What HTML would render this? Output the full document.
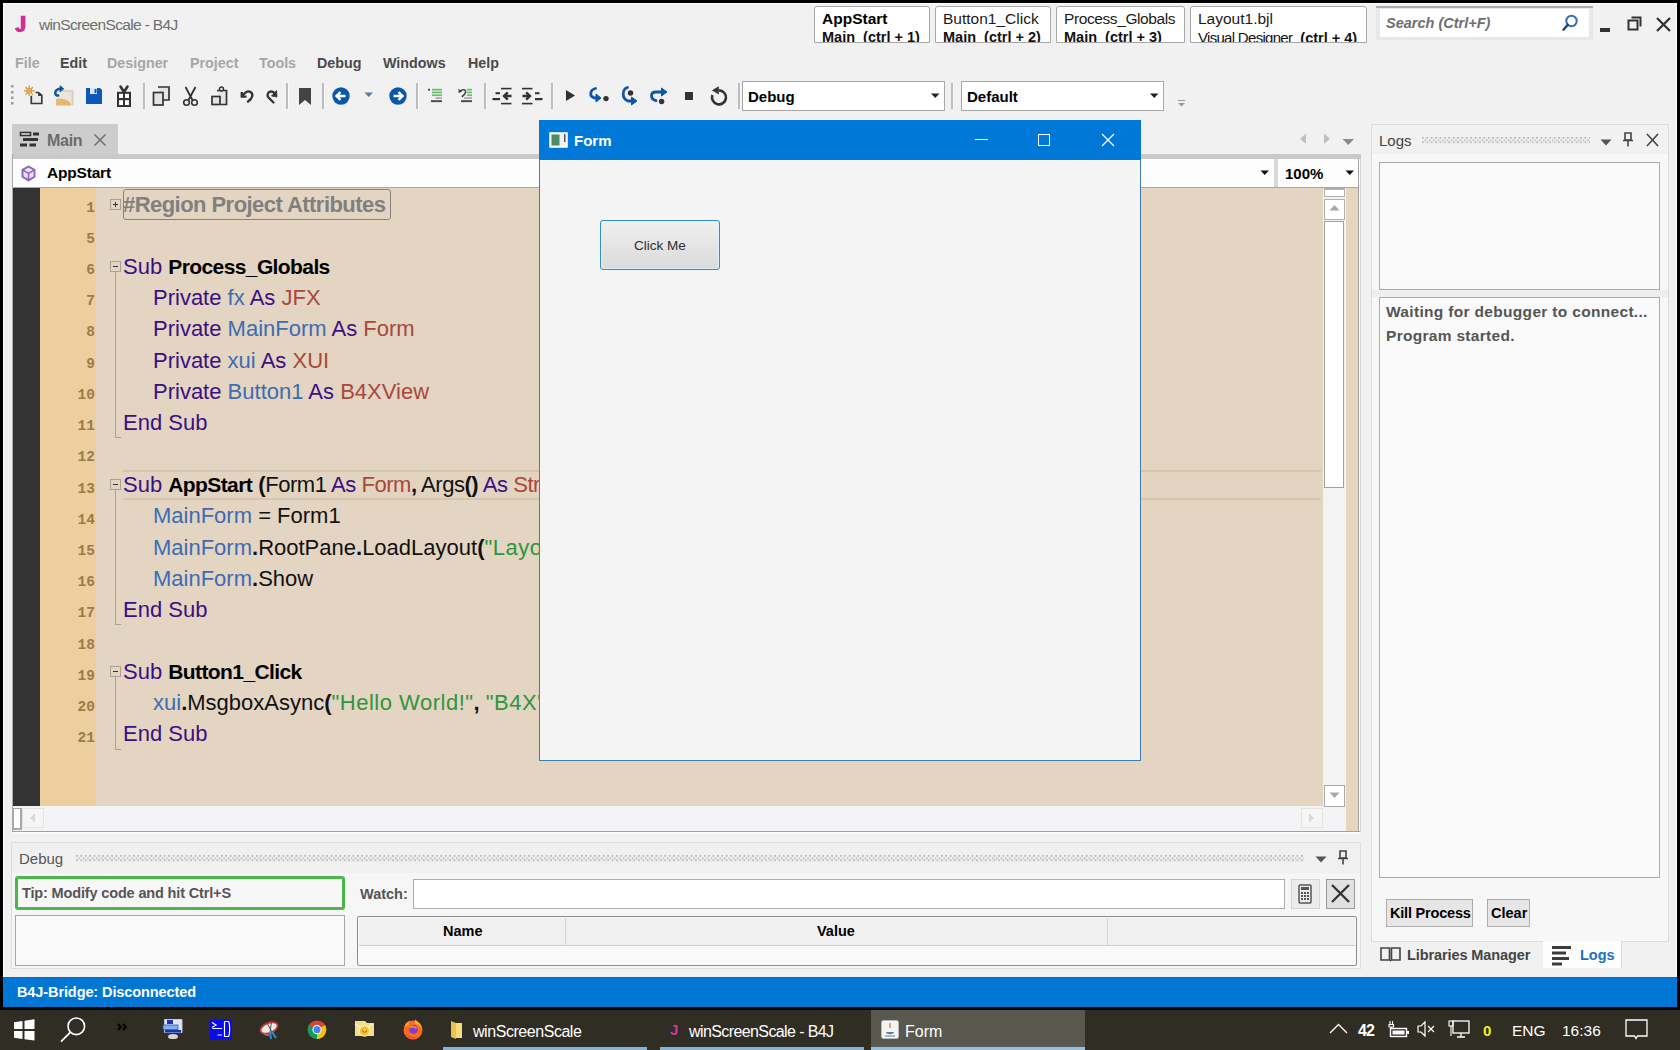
<!DOCTYPE html>
<html><head><meta charset="utf-8">
<style>
*{box-sizing:border-box}
html,body{margin:0;padding:0}
body{width:1680px;height:1050px;background:#000;position:relative;overflow:hidden;font-family:"Liberation Sans",sans-serif;}
.a{position:absolute}
.t{position:absolute;white-space:nowrap;line-height:1}
svg{position:absolute;overflow:visible}
.mn{font-weight:bold;font-size:14.3px;top:56px;color:#a6a6a6}
.md{color:#4a4a4a}
.sep{position:absolute;top:83px;width:3px;height:26px;background:#bdbdbd;border-right:1px solid #fafafa}
.code{position:absolute;left:0;top:0;font-size:22px;line-height:1;white-space:nowrap;color:#111}
.kw{color:#3b0f82}.vr{color:#3d6cb3}.ty{color:#a8483e}.st{color:#2f9640;letter-spacing:0.5px}.bd{font-weight:bold;color:#000;font-size:21px;letter-spacing:-0.6px}
.ln{position:absolute;font-family:"Liberation Mono",monospace;font-size:14.5px;font-weight:bold;color:#9a7c46;text-align:right;width:40px;left:55px;line-height:1}
.fold{position:absolute;left:110px;width:11px;height:11px;border:1px solid #a9a196;background:#e3d5c2}
.fold:before{content:"";position:absolute;left:2px;top:4px;width:5px;height:1px;background:#333}
.fold.p:after{content:"";position:absolute;left:4px;top:2px;width:1px;height:5px;background:#333}
.vl{position:absolute;left:115px;width:1px;background:#a9a196}
.tab{position:absolute;top:6px;height:37px;background:#fff;border:1px solid #a8a8a8;border-radius:3px 3px 0 0;overflow:hidden}
.tab .l1{position:absolute;left:7px;top:4px;font-size:15.5px;color:#1a1a1a;white-space:nowrap;line-height:1}
.tab .l2{position:absolute;left:7px;top:23px;font-size:14.5px;color:#111;font-weight:bold;white-space:nowrap;line-height:1}
</style></head><body>
<!-- main window -->
<div class="a" style="left:3px;top:3px;width:1674px;height:1004px;background:#f1f1f1;border:1px solid #fff;border-bottom:0"></div>

<!-- title -->
<svg style="left:0;top:0" width="30" height="36"><path d="M20.8 15.8H25.4V26C25.4 30.3 23 32.2 20 32.2C17.4 32.2 15.5 30.6 14.9 28.2L18.6 27C19 28.3 19.5 28.9 20.2 28.9C20.9 28.9 20.8 28 20.8 26.6Z" fill="#cd2f92"/></svg>
<div class="t" style="left:39px;top:17px;font-size:15.5px;color:#6e6e6e;letter-spacing:-0.65px">winScreenScale - B4J</div>

<!-- title tabs -->
<div class="tab" style="left:814px;width:116px"><div class="l1" style="font-weight:bold;color:#000;font-size:15.5px">AppStart</div><div class="l2">Main&nbsp; (ctrl + 1)</div></div>
<div class="tab" style="left:935px;width:116px"><div class="l1">Button1_Click</div><div class="l2">Main&nbsp; (ctrl + 2)</div></div>
<div class="tab" style="left:1056px;width:129px"><div class="l1" style="letter-spacing:-0.4px">Process_Globals</div><div class="l2">Main&nbsp; (ctrl + 3)</div></div>
<div class="tab" style="left:1190px;width:177px"><div class="l1">Layout1.bjl</div><div class="l2"><span style="font-weight:normal;font-size:15px;letter-spacing:-0.7px">Visual Designer</span>&nbsp; (ctrl + 4)</div></div>

<!-- search -->
<div class="a" style="left:1376px;top:6px;width:217px;height:34px;background:#e6e8ec;border-top:2px solid #a9abb0"></div>
<div class="a" style="left:1380px;top:9px;width:209px;height:28px;background:#fff"></div>
<div class="t" style="left:1386px;top:16px;font-size:14.5px;font-style:italic;font-weight:bold;color:#6e6e6e">Search (Ctrl+F)</div>
<svg style="left:1560px;top:13px" width="20" height="20"><circle cx="11.5" cy="8" r="5.2" fill="none" stroke="#3569c4" stroke-width="2"/><line x1="7.8" y1="11.8" x2="3.5" y2="16.8" stroke="#1f3d80" stroke-width="2.4" stroke-linecap="round"/></svg>
<!-- window controls -->
<div class="a" style="left:1600px;top:28px;width:10px;height:4px;background:#333"></div>
<svg style="left:1626px;top:15px" width="18" height="18"><rect x="2.5" y="5.5" width="9" height="9" fill="none" stroke="#333" stroke-width="2"/><path d="M5.5 2.5H14.5V11.5" fill="none" stroke="#333" stroke-width="2"/></svg>
<svg style="left:1655px;top:16px" width="17" height="17"><path d="M2 2L15 15M15 2L2 15" stroke="#333" stroke-width="2.3"/></svg>

<!-- menu -->
<div class="t mn" style="left:15px">File</div>
<div class="t mn md" style="left:60px">Edit</div>
<div class="t mn" style="left:107px">Designer</div>
<div class="t mn" style="left:190px">Project</div>
<div class="t mn" style="left:259px">Tools</div>
<div class="t mn md" style="left:317px">Debug</div>
<div class="t mn md" style="left:383px">Windows</div>
<div class="t mn md" style="left:468px">Help</div>
<!-- toolbar -->
<svg style="left:11px;top:85px" width="4" height="22"><rect x="0" y="0" width="2.5" height="2.5" fill="#9a9a9a"/><rect x="0" y="6" width="2.5" height="2.5" fill="#9a9a9a"/><rect x="0" y="11.5" width="2.5" height="2.5" fill="#9a9a9a"/><rect x="0" y="17" width="2.5" height="2.5" fill="#9a9a9a"/></svg>
<!-- new -->
<svg style="left:20px;top:82px" width="26" height="26">
<path d="M11.3 13.8V21.5H21.8V13.5L18.5 10.5H15.5" fill="#ececec" stroke="#3a3a3a" stroke-width="1.7"/><path d="M18.5 10.5V13.5H21.8Z" fill="#3a3a3a" stroke="#3a3a3a" stroke-width="1"/>
<g stroke="#d0963a" stroke-width="1.2" stroke-linecap="round"><line x1="9.2" y1="4" x2="9.2" y2="13.8"/><line x1="4.3" y1="8.9" x2="14.1" y2="8.9"/><line x1="5.8" y1="5.5" x2="12.6" y2="12.3"/><line x1="12.6" y1="5.5" x2="5.8" y2="12.3"/></g><circle cx="9.2" cy="8.9" r="2.3" fill="#f0b450" stroke="#d08a2a" stroke-width="0.8"/>
</svg>
<!-- open -->
<svg style="left:50px;top:82px" width="28" height="26">
<path d="M6 7.5H22.5V23.5H6Z" fill="#ebe6dc"/><path d="M9 9H22.5V23.5" fill="none" stroke="#d8ccb2" stroke-width="1.6"/>
<path d="M6 17.5C9 16 15 16 20 20.5L21.5 23.5H6Z" fill="#e3b872"/>
<path d="M10.5 6.8C7 6.8 5 9 5.3 11.3C5.5 12.8 6.6 13.6 8.2 13.6" fill="none" stroke="#0c57a8" stroke-width="2.5" stroke-linecap="round"/><path d="M10 3.8L13.8 6.8L10 9.8Z" fill="#0c57a8" stroke="#0c57a8" stroke-width="0.8" stroke-linejoin="round"/>
</svg>
<!-- save -->
<svg style="left:85px;top:87px" width="18" height="18"><path d="M1 1H15L17 3V17H1Z" fill="#0b58b8"/><rect x="5" y="1" width="7" height="6" fill="#dde6f4"/><rect x="9.5" y="2" width="2" height="4" fill="#0b58b8"/></svg>
<!-- gift -->
<svg style="left:110px;top:82px" width="30" height="26"><path d="M14 10L10.5 4.5M14 10L17.5 4.5" stroke="#333" stroke-width="2.6" stroke-linecap="round"/><rect x="8" y="10.8" width="12" height="13.2" fill="#fff" stroke="#333" stroke-width="2"/><rect x="13" y="10" width="2" height="14" fill="#333"/><rect x="7.5" y="16" width="13" height="2.2" fill="#333"/></svg>
<div class="sep" style="left:143px"></div>
<!-- copy -->
<svg style="left:152px;top:86px" width="20" height="20"><path d="M6 1H17V14H11" fill="#e4e4e4" stroke="#333" stroke-width="1.7"/><rect x="1.5" y="6.5" width="9.5" height="12.5" fill="#e4e4e4" stroke="#333" stroke-width="1.7"/></svg>
<!-- cut -->
<svg style="left:182px;top:86px" width="18" height="21"><path d="M3.5 1L11 15M13.5 1L6 15" stroke="#333" stroke-width="1.8"/><circle cx="4.5" cy="16.5" r="2.8" fill="#f1f1f1" stroke="#333" stroke-width="1.6"/><circle cx="12.5" cy="16.5" r="2.8" fill="#f1f1f1" stroke="#333" stroke-width="1.6"/></svg>
<!-- paste -->
<svg style="left:210px;top:86px" width="20" height="21"><path d="M7 4.5H16.5V18.5H11" fill="#e4e4e4" stroke="#333" stroke-width="1.7"/><circle cx="11.5" cy="3" r="2" fill="#e4e4e4" stroke="#333" stroke-width="1.4"/><rect x="2" y="10.5" width="8" height="8" fill="#e4e4e4" stroke="#333" stroke-width="1.7"/></svg>
<!-- undo -->
<svg style="left:236px;top:84px" width="48" height="24"><path d="M6.5 12C9 8.5 12 6.5 14.5 8C17.5 10 17 14 12 17.5" fill="none" stroke="#333" stroke-width="2.3" stroke-linecap="round"/><path d="M5.8 8V12.6H10.5" fill="none" stroke="#333" stroke-width="2.4"/>
<path d="M37.5 18.5L32.5 13.5C30.5 11 32 7.5 35 7.5C36.5 7.5 37.5 8 38.5 9" fill="none" stroke="#333" stroke-width="2.3" stroke-linecap="round"/><path d="M40.5 6.5L41 13L35.5 12Z" fill="#333" stroke="#333" stroke-width="0.8" stroke-linejoin="round"/></svg>
<div class="sep" style="left:286px"></div>
<!-- bookmark -->
<svg style="left:298px;top:87px" width="15" height="20"><path d="M1 1H13V18L7 13L1 18Z" fill="#444"/></svg>
<div class="sep" style="left:322px"></div>
<!-- back -->
<svg style="left:331px;top:86px" width="20" height="20"><circle cx="10" cy="10" r="8.7" fill="#0c57a8"/><path d="M14.5 10H6M9.5 6.2L5.5 10L9.5 13.8" fill="none" stroke="#fff" stroke-width="2.4"/></svg>
<svg style="left:364px;top:92px" width="10" height="6"><path d="M0.5 0.5H9L4.75 5Z" fill="#5878a0"/></svg>
<!-- fwd -->
<svg style="left:388px;top:86px" width="20" height="20"><circle cx="10" cy="10" r="8.7" fill="#0c57a8"/><path d="M5.5 10H14M10.5 6.2L14.5 10L10.5 13.8" fill="none" stroke="#fff" stroke-width="2.4"/></svg>
<div class="sep" style="left:416px"></div>
<!-- comment / indent icons -->
<svg style="left:420px;top:82px" width="125" height="26">
<rect x="8" y="6.8" width="2" height="1.8" fill="#444"/>
<g fill="#69bf69"><rect x="12" y="6.8" width="10" height="1.7"/><rect x="12" y="9.6" width="10" height="1.7"/><rect x="12" y="12.4" width="10" height="1.7"/></g>
<rect x="15.5" y="15.5" width="6.5" height="1.2" fill="#8a8a8a"/><rect x="11" y="18.2" width="11" height="1.9" fill="#474747"/>
<path d="M40.3 9.3C42 7 45.6 7.3 45.6 9.8C45.6 11.8 43.8 13.3 41.8 14.8" fill="none" stroke="#444" stroke-width="1.6"/><path d="M38.3 6.8L38.8 11.3L42.2 9.2Z" fill="#444"/>
<g fill="#69bf69"><rect x="47" y="6.8" width="5" height="1.7"/><rect x="47" y="9.6" width="5" height="1.7"/><rect x="47" y="12.4" width="5" height="1.7"/></g>
<rect x="44" y="15.5" width="8" height="1.2" fill="#8a8a8a"/><rect x="41" y="18.2" width="11" height="1.9" fill="#474747"/>
<rect x="81" y="5.8" width="10.5" height="1.6" fill="#333"/><rect x="81" y="20.8" width="10.5" height="1.6" fill="#333"/>
<rect x="75.5" y="10.2" width="4.5" height="2" fill="#333"/><rect x="72.5" y="16" width="7.5" height="2.2" fill="#333"/>
<path d="M91.5 14H84.5M87.8 10.3L84 14L87.8 17.7" fill="none" stroke="#333" stroke-width="2.4"/>
<rect x="102" y="5.8" width="10.5" height="1.6" fill="#333"/><rect x="102" y="20.8" width="10.5" height="1.6" fill="#333"/>
<rect x="115" y="10.2" width="4.5" height="2" fill="#333"/><rect x="115" y="16" width="7.5" height="2.2" fill="#333"/>
<path d="M102.5 14H109.5M106.2 10.3L110 14L106.2 17.7" fill="none" stroke="#333" stroke-width="2.4"/>
</svg>
<div class="sep" style="left:484px"></div>
<div class="sep" style="left:551px"></div>
<!-- play -->
<svg style="left:565px;top:89px" width="12" height="14"><path d="M1 1L10 6.5L1 12Z" fill="#333"/></svg>
<!-- step icons -->
<svg style="left:585px;top:82px" width="90" height="28">
<path d="M10.5 6.5C4.5 8 4 15 10 16H12" fill="none" stroke="#0c57a8" stroke-width="2.8" stroke-linecap="round"/><path d="M11 12L16 16L11 20Z" fill="#0c57a8" stroke="#0c57a8" stroke-width="1" stroke-linejoin="round"/><circle cx="21" cy="16.6" r="2.7" fill="#333"/>
<path d="M42.5 5.5C37 7 36.5 17 43 19H47" fill="none" stroke="#0c57a8" stroke-width="2.8" stroke-linecap="round"/><path d="M46.5 15L52 19L46.5 23Z" fill="#0c57a8" stroke="#0c57a8" stroke-width="1" stroke-linejoin="round"/><circle cx="45.5" cy="11" r="2.7" fill="#333"/>
<path d="M71 18.7C65 17 65 10 71 10H76" fill="none" stroke="#0c57a8" stroke-width="2.8" stroke-linecap="round"/><path d="M76.5 6L82 10L76.5 14Z" fill="#0c57a8" stroke="#0c57a8" stroke-width="1" stroke-linejoin="round"/><circle cx="76.6" cy="19.5" r="2.7" fill="#333"/>
</svg>
<!-- stop -->
<svg style="left:684px;top:91px" width="10" height="10"><rect x="1" y="1" width="8" height="8" fill="#333"/></svg>
<!-- restart -->
<svg style="left:706px;top:84px" width="26" height="24"><path d="M13 6.4A7 7 0 1 1 6.4 11" fill="none" stroke="#333" stroke-width="2.6"/><path d="M6 6.3L12.8 2.2V10.4Z" fill="#333"/></svg>
<div class="sep" style="left:738px"></div>
<!-- combos -->
<div class="a" style="left:742px;top:81px;width:203px;height:30px;background:#fff;border:1px solid #a8a8a8"></div>
<div class="t" style="left:748px;top:89px;font-size:15px;font-weight:bold;color:#000">Debug</div>
<svg style="left:931px;top:93px" width="9" height="6"><path d="M0 0.5H8.5L4.25 5Z" fill="#222"/></svg>
<div class="sep" style="left:951px"></div>
<div class="a" style="left:961px;top:81px;width:203px;height:30px;background:#fff;border:1px solid #a8a8a8"></div>
<div class="t" style="left:967px;top:89px;font-size:15px;font-weight:bold;color:#000">Default</div>
<svg style="left:1150px;top:93px" width="9" height="6"><path d="M0 0.5H8.5L4.25 5Z" fill="#222"/></svg>
<svg style="left:1177px;top:99px" width="9" height="10"><rect x="1" y="1" width="7" height="1" fill="#999"/><path d="M1 4H8L4.5 7.5Z" fill="#999"/></svg>
<!-- editor tab -->
<div class="a" style="left:12px;top:124px;width:106px;height:31px;background:#cdcdcd"></div>
<svg style="left:19px;top:131px" width="22" height="18"><rect x="1.5" y="1.5" width="10" height="3" fill="#eee" stroke="#333" stroke-width="1.6"/><rect x="14" y="1.5" width="6" height="3" fill="#333"/><rect x="4" y="7" width="15" height="3" fill="#333"/><rect x="1" y="12.5" width="7" height="3" fill="#333"/><rect x="10.5" y="12.5" width="6.5" height="3" fill="#333"/></svg>
<div class="t" style="left:47px;top:133px;font-size:16px;font-weight:bold;color:#6b6b6b;letter-spacing:-0.3px">Main</div>
<svg style="left:93px;top:133px" width="14" height="14"><path d="M1.5 1.5L12.5 12.5M12.5 1.5L1.5 12.5" stroke="#707070" stroke-width="1.5"/></svg>
<!-- nav arrows -->
<svg style="left:1299px;top:133px" width="8" height="12"><path d="M7 0.5V11L1 5.75Z" fill="#c0c0c0"/></svg>
<svg style="left:1323px;top:133px" width="8" height="12"><path d="M1 0.5V11L7 5.75Z" fill="#c0c0c0"/></svg>
<svg style="left:1342px;top:138px" width="13" height="8"><path d="M0.5 1H12L6.25 7Z" fill="#8a8a8a"/></svg>

<!-- editor frame -->
<div class="a" style="left:12px;top:154px;width:1349px;height:5px;background:#c9c9c9"></div>
<div class="a" style="left:12px;top:154px;width:1px;height:678px;background:#a9a9a9"></div>
<div class="a" style="left:1358px;top:159px;width:1px;height:673px;background:#a0a0a0"></div><div class="a" style="left:1359px;top:159px;width:1px;height:673px;background:#fff"></div><div class="a" style="left:1360px;top:159px;width:1px;height:673px;background:#d4d4d4"></div>
<div class="a" style="left:12px;top:831px;width:1348px;height:1px;background:#a0a0a0"></div>
<div class="a" style="left:12px;top:832px;width:1349px;height:2px;background:#fafafa"></div>
<div class="a" style="left:13px;top:159px;width:1345px;height:29px;background:#fdfdfd"></div>
<div class="a" style="left:13px;top:187px;width:1345px;height:1px;background:#a8a8a8"></div>
<div class="a" style="left:1274px;top:159px;width:4px;height:28px;background:#d9d9d9"></div>
<svg style="left:21px;top:165px" width="16" height="17"><path d="M7.5 1.5L13.5 4.8V11.8L7.5 15.3L1.5 11.8V4.8Z" fill="#ebe0f5" stroke="#8a66b6" stroke-width="1.9"/><path d="M7.5 8.3V15M7.5 8.3L2.3 5.3M7.5 8.3L12.7 5.3" stroke="#8a66b6" stroke-width="1.5" fill="none"/></svg>
<div class="t" style="left:47px;top:165px;font-size:15.5px;font-weight:bold;color:#000;letter-spacing:-0.2px">AppStart</div>
<svg style="left:1260px;top:170px" width="10" height="6"><path d="M0.5 0.5H9L4.75 5Z" fill="#111"/></svg>
<div class="t" style="left:1285px;top:166px;font-size:15px;font-weight:bold;color:#000">100%</div>
<svg style="left:1345px;top:170px" width="10" height="6"><path d="M0.5 0.5H9L4.75 5Z" fill="#111"/></svg>

<!-- code area -->
<div class="a" style="left:13px;top:188px;width:1310px;height:618px;background:#e3d5c2"></div>
<div class="a" style="left:13px;top:188px;width:27px;height:618px;background:#333"></div>
<div class="a" style="left:40px;top:188px;width:56px;height:618px;background:#edcf9f"></div>
<!-- current line -->
<div class="a" style="left:123px;top:470px;width:1198px;height:30px;border:2px solid #d6c6b0;border-left:0;border-right:0;background:#e2d4c0"></div>
<!-- vscroll -->
<div class="a" style="left:1323px;top:188px;width:23px;height:618px;background:#f3f3f3"></div>
<div class="a" style="left:1346px;top:188px;width:12px;height:643px;background:#e6d6bc"></div>
<div class="a" style="left:1324px;top:188px;width:21px;height:9px;background:#fff;border:1px solid #b0b0b0;border-top:2px solid #b0b0b0"></div>
<div class="a" style="left:1324px;top:199px;width:21px;height:21px;background:#fff;border:1px solid #b0b0b0"></div>
<svg style="left:1329px;top:204px" width="11" height="7"><path d="M0.5 6.5H10.5L5.5 1Z" fill="#a8a8a8"/></svg>
<div class="a" style="left:1324px;top:221px;width:20px;height:267px;background:#fff;border:1px solid #a0a0a0"></div>
<div class="a" style="left:1324px;top:785px;width:21px;height:22px;background:#fff;border:1px solid #a8a8a8;z-index:1"></div>
<svg style="left:1329px;top:792px;z-index:2" width="11" height="7"><path d="M0.5 0.5H10.5L5.5 6Z" fill="#a8a8a8"/></svg>
<!-- hscroll -->
<div class="a" style="left:13px;top:806px;width:1333px;height:25px;background:#f4f4f6"></div>
<div class="a" style="left:13px;top:808px;width:9px;height:22px;background:#fff;border:1px solid #a8a8a8;border-width:1px 2px 2px 1px"></div>
<div class="a" style="left:22px;top:808px;width:22px;height:20px;background:#f6f6f6;border:1px solid #e4e4e4"></div>
<svg style="left:29px;top:813px" width="7" height="10"><path d="M6 0.5V9.5L1 5Z" fill="#d8d8d8"/></svg>
<div class="a" style="left:1301px;top:808px;width:22px;height:20px;background:#f6f6f6;border:1px solid #e4e4e4"></div>
<svg style="left:1308px;top:813px" width="7" height="10"><path d="M1 0.5V9.5L6 5Z" fill="#d8d8d8"/></svg>

<!-- gutter line numbers -->
<div class="ln" style="top:201px">1</div>
<div class="ln" style="top:232px">5</div>
<div class="ln" style="top:263px">6</div>
<div class="ln" style="top:294px">7</div>
<div class="ln" style="top:325px">8</div>
<div class="ln" style="top:357px">9</div>
<div class="ln" style="top:388px">10</div>
<div class="ln" style="top:419px">11</div>
<div class="ln" style="top:450px">12</div>
<div class="ln" style="top:482px">13</div>
<div class="ln" style="top:513px">14</div>
<div class="ln" style="top:544px">15</div>
<div class="ln" style="top:575px">16</div>
<div class="ln" style="top:606px">17</div>
<div class="ln" style="top:638px">18</div>
<div class="ln" style="top:669px">19</div>
<div class="ln" style="top:700px">20</div>
<div class="ln" style="top:731px">21</div>

<!-- folds -->
<div class="fold p" style="top:199px"></div>
<div class="a" style="left:123px;top:189px;width:268px;height:31px;border:1px solid #8a8278;border-radius:3px"></div>
<div class="fold" style="top:261px"></div>
<div class="vl" style="top:272px;height:165px"></div><div class="a" style="left:115px;top:437px;width:6px;height:1px;background:#a9a196"></div>
<div class="fold" style="top:479px"></div>
<div class="vl" style="top:490px;height:134px"></div><div class="a" style="left:115px;top:624px;width:6px;height:1px;background:#a9a196"></div>
<div class="fold" style="top:666px"></div>
<div class="vl" style="top:677px;height:72px"></div><div class="a" style="left:115px;top:749px;width:6px;height:1px;background:#a9a196"></div>

<!-- code text -->
<div class="a" style="left:0;top:0;width:539px;height:806px;overflow:hidden">
<div class="code" style="left:123px;top:194px;color:#808080;font-weight:bold;letter-spacing:-0.55px">#Region Project Attributes</div>
<div class="code" style="left:123px;top:256px"><span class="kw">Sub</span> <span class="bd">Process_Globals</span></div>
<div class="code" style="left:153px;top:287px"><span class="kw">Private</span> <span class="vr">fx</span> <span class="kw">As</span> <span class="ty">JFX</span></div>
<div class="code" style="left:153px;top:318px"><span class="kw">Private</span> <span class="vr">MainForm</span> <span class="kw">As</span> <span class="ty">Form</span></div>
<div class="code" style="left:153px;top:350px"><span class="kw">Private</span> <span class="vr">xui</span> <span class="kw">As</span> <span class="ty">XUI</span></div>
<div class="code" style="left:153px;top:381px"><span class="kw">Private</span> <span class="vr">Button1</span> <span class="kw">As</span> <span class="ty">B4XView</span></div>
<div class="code" style="left:123px;top:412px"><span class="kw">End Sub</span></div>
<div class="code" style="left:123px;top:474px"><span class="kw">Sub</span> <span class="bd">AppStart</span> <span style="letter-spacing:-0.45px"><b>(</b>Form1 <span class="kw">As</span> <span class="ty">Form</span><b>,</b> Args<b>()</b> <span class="kw">As</span> <span class="ty">String</span><b>)</b></span></div>
<div class="code" style="left:153px;top:505px"><span class="vr">MainForm</span> = Form1</div>
<div class="code" style="left:153px;top:537px"><span class="vr">MainForm</span><b>.</b>RootPane<b>.</b>LoadLayout<b>(</b><span class="st">"Layout1"</span><b>)</b></div>
<div class="code" style="left:153px;top:568px"><span class="vr">MainForm</span><b>.</b>Show</div>
<div class="code" style="left:123px;top:599px"><span class="kw">End Sub</span></div>
<div class="code" style="left:123px;top:661px"><span class="kw">Sub</span> <span class="bd">Button1_Click</span></div>
<div class="code" style="left:153px;top:692px"><span class="vr">xui</span><b>.</b>MsgboxAsync<b>(</b><span class="st">"Hello World!"</span><b>,</b> <span class="st">"B4X"</span><b>)</b></div>
<div class="code" style="left:123px;top:723px"><span class="kw">End Sub</span></div>
</div>
<!-- form window -->
<div class="a" style="left:539px;top:120px;width:602px;height:641px;background:#f4f4f4;border:1px solid #3f7cb8"></div>
<div class="a" style="left:539px;top:120px;width:602px;height:40px;background:#0078d7"></div>
<svg style="left:549px;top:132px" width="19" height="16"><rect x="1" y="1" width="17" height="14" fill="#f0f0f0" stroke="#fff" stroke-width="1.5"/><rect x="2.5" y="2.5" width="8" height="11" fill="#4f8a6a"/><rect x="15" y="2" width="1.5" height="8" fill="#556"/></svg>
<div class="t" style="left:574px;top:133px;font-size:15px;font-weight:bold;color:#fff">Form</div>
<div class="a" style="left:975px;top:139px;width:13px;height:1px;background:#fff"></div>
<div class="a" style="left:1038px;top:134px;width:12px;height:12px;border:1px solid #fff"></div>
<svg style="left:1101px;top:133px" width="14" height="14"><path d="M1 1L13 13M13 1L1 13" stroke="#fff" stroke-width="1.2"/></svg>
<div class="a" style="left:600px;top:220px;width:120px;height:50px;border:1.5px solid #2b8fd2;border-radius:3px;box-shadow:inset 0 0 0 1px #dff3fb;background:linear-gradient(#f0f0f0,#dadada)"></div>
<div class="t" style="left:634px;top:238.5px;font-size:13.5px;color:#2e2e2e">Click Me</div>

<!-- logs panel -->
<div class="a" style="left:1371px;top:124px;width:298px;height:818px;background:#f7f7f7;border:1px solid #dcdcdc"></div>
<div class="a" style="left:1372px;top:125px;width:296px;height:29px;background:#f1f1f1"></div>
<div class="t" style="left:1379px;top:133px;font-size:15px;color:#444">Logs</div>
<div class="a" style="left:1422px;top:137px;width:168px;height:7px;background-image:radial-gradient(circle at 1px 1px,#b9b9b9 0.8px,transparent 1.1px),radial-gradient(circle at 3.2px 3.2px,#b9b9b9 0.8px,transparent 1.1px);background-size:4.4px 4.4px"></div>
<svg style="left:1600px;top:139px" width="12" height="7"><path d="M0.5 0.5H11.5L6 6.5Z" fill="#555"/></svg>
<svg style="left:1622px;top:132px" width="12" height="15"><path d="M3 1H9V8H3Z" fill="none" stroke="#444" stroke-width="1.6"/><path d="M1 8.5H11M6 8.5V14.5" stroke="#444" stroke-width="1.6"/></svg>
<svg style="left:1646px;top:133px" width="13" height="14"><path d="M1 1L12 13M12 1L1 13" stroke="#444" stroke-width="1.6"/></svg>
<div class="a" style="left:1379px;top:162px;width:281px;height:128px;background:#fafafa;border:1px solid #ababab"></div>
<div class="a" style="left:1372px;top:290px;width:296px;height:7px;background:#eeeeee"></div>
<div class="a" style="left:1379px;top:297px;width:281px;height:581px;background:#fafafa;border:1px solid #ababab"></div>
<div class="t" style="left:1386px;top:304px;font-size:15.5px;font-weight:bold;color:#555;letter-spacing:0.32px">Waiting for debugger to connect...</div>
<div class="t" style="left:1386px;top:328px;font-size:15.5px;font-weight:bold;color:#555;letter-spacing:0.3px">Program started.</div>
<div class="a" style="left:1386px;top:899px;width:87px;height:28px;background:#e6e6e6;border:1px solid #adadad"></div>
<div class="t" style="left:1390px;top:906px;font-size:14.5px;font-weight:bold;color:#000;letter-spacing:-0.2px">Kill Process</div>
<div class="a" style="left:1487px;top:899px;width:43px;height:28px;background:#e6e6e6;border:1px solid #adadad"></div>
<div class="t" style="left:1491px;top:906px;font-size:14.5px;font-weight:bold;color:#000">Clear</div>
<!-- bottom tabs -->
<div class="a" style="left:1543px;top:941px;width:79px;height:27px;background:#fdfdfd;border-right:1px solid #ddd"></div>
<svg style="left:1380px;top:946px" width="21" height="17"><path d="M1 2H9.5V14H1Z M11.5 2H20V14H11.5Z" fill="none" stroke="#444" stroke-width="1.6"/><path d="M9.5 14L10.5 16L11.5 14" fill="#444"/></svg>
<div class="t" style="left:1407px;top:948px;font-size:14.5px;font-weight:bold;color:#444;letter-spacing:-0.1px">Libraries Manager</div>
<svg style="left:1551px;top:945px" width="22" height="21"><rect x="1" y="1" width="19" height="3" fill="#3c3c3c"/><rect x="1" y="6.5" width="14" height="3" fill="#3c3c3c"/><rect x="1" y="12" width="17" height="3" fill="#3c3c3c"/><rect x="1" y="17.5" width="10" height="3" fill="#3c3c3c"/></svg>
<div class="t" style="left:1580px;top:948px;font-size:14.5px;font-weight:bold;color:#1f6fbf">Logs</div>

<!-- debug panel -->
<div class="a" style="left:11px;top:842px;width:1350px;height:127px;background:#f6f6f6;border:1px solid #dedede"></div>
<div class="a" style="left:12px;top:843px;width:1348px;height:30px;background:#f0f0f0"></div>
<div class="t" style="left:19px;top:851px;font-size:15px;color:#555">Debug</div>
<div class="a" style="left:76px;top:855px;width:1228px;height:7px;background-image:radial-gradient(circle at 1px 1px,#b9b9b9 0.8px,transparent 1.1px),radial-gradient(circle at 3.2px 3.2px,#b9b9b9 0.8px,transparent 1.1px);background-size:4.4px 4.4px"></div>
<svg style="left:1315px;top:856px" width="12" height="7"><path d="M0.5 0.5H11.5L6 6.5Z" fill="#555"/></svg>
<svg style="left:1337px;top:850px" width="12" height="15"><path d="M3 1H9V8H3Z" fill="none" stroke="#444" stroke-width="1.6"/><path d="M1 8.5H11M6 8.5V14.5" stroke="#444" stroke-width="1.6"/></svg>
<div class="a" style="left:15px;top:876px;width:330px;height:34px;background:#f7f7f7;border:3px solid #4cb84c;border-radius:3px"></div>
<div class="t" style="left:22px;top:886px;font-size:14.5px;font-weight:bold;color:#555;letter-spacing:-0.15px">Tip: Modify code and hit Ctrl+S</div>
<div class="a" style="left:15px;top:915px;width:330px;height:51px;background:#f9f9f9;border:1px solid #a8a8a8"></div>
<div class="t" style="left:360px;top:887px;font-size:14.5px;font-weight:bold;color:#555">Watch:</div>
<div class="a" style="left:413px;top:879px;width:872px;height:30px;background:#fff;border:1px solid #adadad"></div>
<div class="a" style="left:1291px;top:879px;width:29px;height:30px;background:#ececec;border:1px solid #d4d4d4"></div>
<svg style="left:1298px;top:884px" width="14" height="20"><rect x="1" y="1" width="12" height="18" rx="1" fill="none" stroke="#555" stroke-width="1.5"/><rect x="3" y="3" width="8" height="3" fill="#555"/><g fill="#555"><rect x="3" y="8" width="2" height="2"/><rect x="6" y="8" width="2" height="2"/><rect x="9" y="8" width="2" height="2"/><rect x="3" y="11" width="2" height="2"/><rect x="6" y="11" width="2" height="2"/><rect x="9" y="11" width="2" height="2"/><rect x="3" y="14" width="2" height="2"/><rect x="6" y="14" width="2" height="2"/><rect x="9" y="14" width="2" height="2"/></g></svg>
<div class="a" style="left:1326px;top:879px;width:29px;height:30px;background:#e1e1e1;border:1px solid #9a9a9a"></div>
<svg style="left:1330px;top:883px" width="21" height="21"><path d="M2 2L19 19M19 2L2 19" stroke="#333" stroke-width="2.3"/></svg>
<div class="a" style="left:357px;top:916px;width:1000px;height:50px;background:#f9f9f9;border:1px solid #8c8c8c;border-radius:2px"></div>
<div class="a" style="left:359px;top:918px;width:996px;height:28px;background:#f0f0f0;border-bottom:1px solid #d0d0d0"></div>
<div class="a" style="left:565px;top:918px;width:1px;height:27px;background:#d4d4d4"></div>
<div class="a" style="left:1107px;top:918px;width:1px;height:27px;background:#d4d4d4"></div>
<div class="t" style="left:443px;top:924px;font-size:14.5px;font-weight:bold;color:#000">Name</div>
<div class="t" style="left:817px;top:924px;font-size:14.5px;font-weight:bold;color:#000">Value</div>

<!-- status bar -->
<div class="a" style="left:3px;top:977px;width:1674px;height:30px;background:#0077d5;border-top:1px solid #1b66a8"></div>
<div class="t" style="left:17px;top:985px;font-size:14.5px;font-weight:bold;color:#fff;letter-spacing:-0.1px">B4J-Bridge: Disconnected</div>

<!-- taskbar -->

<!-- taskbar -->
<div class="a" style="left:0;top:1010px;width:1680px;height:40px;background:#2f2d24"></div>
<div class="a" style="left:0;top:1007px;width:1680px;height:3px;background:#050505"></div>
<svg style="left:13px;top:1019px" width="23" height="23"><path d="M1 3.2L9.5 2V10H1Z M11.5 1.7L21.5 0.3V10H11.5Z M1 12H9.5V20L1 18.8Z M11.5 12H21.5V21.5L11.5 20.2Z" fill="#fff"/></svg>
<svg style="left:59px;top:1016px" width="28" height="28"><circle cx="17.3" cy="10.3" r="8.3" fill="none" stroke="#fff" stroke-width="1.6"/><line x1="11.3" y1="16.3" x2="2" y2="25.6" stroke="#fff" stroke-width="1.8"/></svg>
<svg style="left:117px;top:1023px" width="13" height="8"><path d="M1 1L4 4L1 7M6 1L9 4L6 7" fill="none" stroke="#000" stroke-width="2"/></svg>
<!-- app icons -->
<svg style="left:160px;top:1016px" width="26" height="26"><path d="M4.5 3.5H22V16.5H4.5Z" fill="#dfe6f8" stroke="#b8c4e8" stroke-width="1"/><rect x="7" y="4" width="6" height="4" fill="#2030c0"/><rect x="3" y="9" width="15" height="4.5" fill="#7fb2ec" stroke="#2a56b8" stroke-width="0.8"/><path d="M5 14H21V16.5H5Z" fill="#2030a8"/><ellipse cx="13" cy="20.5" rx="5" ry="2.6" fill="#d8d6ce"/></svg>
<svg style="left:210px;top:1019px" width="23" height="21"><rect x="0" y="0.5" width="22" height="20" fill="#0a0af0"/><path d="M2 3.5L6 6L2 8.5M2.5 9.5H12M7.5 16H12M14.5 2.5H18.5C20 4 20 16 18.5 17.5H14.5V2.5" fill="none" stroke="#fff" stroke-width="1.2"/></svg>
<svg style="left:258px;top:1018px" width="24" height="24"><ellipse cx="11" cy="10" rx="9" ry="5" fill="#f4eaea" stroke="#c23a3a" stroke-width="1.8" transform="rotate(-22 11 10)"/><path d="M6 15C7 17 9 17.5 11 17" fill="none" stroke="#b87070" stroke-width="1.5"/><path d="M9 5L14 14M13.5 4L12 14" stroke="#444" stroke-width="0.9"/><path d="M12 14L13 21M14 14L18 20" stroke="#2a8ed0" stroke-width="2"/></svg>
<svg style="left:306px;top:1018px" width="23" height="23"><circle cx="11" cy="11.7" r="9.3" fill="#db4437"/><path d="M11 11.7L19.05 7.05A9.3 9.3 0 0 1 11 21Z" fill="#f4c20d"/><path d="M11 11.7L11 21A9.3 9.3 0 0 1 2.95 7.05Z" fill="#0f9d58"/><circle cx="11" cy="11.7" r="4.6" fill="#fff"/><circle cx="11" cy="11.7" r="3.6" fill="#4285f4"/></svg>
<svg style="left:353px;top:1018px" width="24" height="22"><path d="M2 3H12L14 5H21V18H2Z" fill="#f5dd8c"/><path d="M2 6L11 12L20 6" fill="none" stroke="#fff2c0" stroke-width="1.2"/><circle cx="11.5" cy="13" r="5.2" fill="#f2c230" stroke="#fff6c8" stroke-width="1"/><path d="M9 12.5L11.5 14.5L14 12.5" fill="none" stroke="#8a6a10" stroke-width="1"/></svg>
<svg style="left:402px;top:1018px" width="23" height="23"><circle cx="11" cy="12" r="9.5" fill="#ff6a1f"/><path d="M3 15A9.5 9.5 0 0 0 19 16C17 20 8 21 3 15Z" fill="#e8323c"/><path d="M13 1.5C17 4 20 8 20.5 12C19 8 16 6 13 6Z" fill="#ffb020"/><path d="M2.5 9C3.5 5 6 3 8 2.5C6.5 4.5 6.5 6 7 7Z" fill="#ff9a20"/><circle cx="11.5" cy="11.5" r="4.4" fill="#7b3fd6"/><path d="M8 9.5C10 8 13 8.5 14.5 10.5" fill="none" stroke="#ff8a2a" stroke-width="1.6"/></svg>
<!-- running apps -->
<div class="a" style="left:443px;top:1047px;width:204px;height:3px;background:#7fb3e0"></div>
<svg style="left:450px;top:1020px" width="13" height="20"><path d="M1 1L6 3V19L1 17Z" fill="#e8c24f"/><path d="M6 3H12V18H6Z" fill="#f6dc7a"/></svg>
<div class="t" style="left:473px;top:1024px;font-size:16px;color:#fff;letter-spacing:-0.45px">winScreenScale</div>
<div class="a" style="left:660px;top:1047px;width:204px;height:3px;background:#7fb3e0"></div>
<div class="t" style="left:670px;top:1022px;font-size:15px;font-weight:bold;color:#d6339a">J</div>
<div class="t" style="left:689px;top:1024px;font-size:16px;color:#fff;letter-spacing:-0.6px">winScreenScale - B4J</div>
<div class="a" style="left:871px;top:1010px;width:214px;height:40px;background:#59584f"></div>
<div class="a" style="left:871px;top:1047px;width:214px;height:3px;background:#8fc0ea"></div>
<svg style="left:881px;top:1020px" width="18" height="19"><rect x="0.5" y="0.5" width="17" height="18" rx="2" fill="#f4f4f4" stroke="#bbb"/><path d="M5 12C5 15 13 15 13 12Z" fill="#5382a1"/><path d="M9 3C8 5 10 6 9 8" stroke="#e76f00" stroke-width="1.2" fill="none"/><path d="M4 16H14" stroke="#5382a1" stroke-width="1"/></svg>
<div class="t" style="left:905px;top:1024px;font-size:16px;color:#fff">Form</div>
<!-- tray -->
<svg style="left:1329px;top:1023px" width="20" height="11"><path d="M1 10L9.5 1.5L18 10" fill="none" stroke="#fff" stroke-width="1.4"/></svg>
<div class="t" style="left:1358px;top:1023px;font-size:16px;font-weight:bold;color:#fff;letter-spacing:-1px">42</div>
<svg style="left:1386px;top:1020px" width="25" height="18"><path d="M4 1V4.5M6.5 1V4.5M3 4.5H7.5V7H3ZM5.2 7V9" fill="none" stroke="#fff" stroke-width="1.1"/><rect x="4.5" y="8.5" width="16" height="8" fill="none" stroke="#fff" stroke-width="1.4"/><rect x="6.5" y="10.5" width="12" height="4" fill="#fff"/><rect x="21" y="11" width="2" height="3" fill="#fff"/></svg>
<svg style="left:1417px;top:1021px" width="20" height="16"><path d="M1 5H4L8 1V15L4 11H1Z" fill="none" stroke="#fff" stroke-width="1.2"/><path d="M11 5L17 11M17 5L11 11" stroke="#fff" stroke-width="1.2"/></svg>
<svg style="left:1448px;top:1020px" width="22" height="19"><rect x="5" y="1" width="16" height="12" fill="none" stroke="#fff" stroke-width="1.3"/><rect x="1" y="1" width="4" height="5" fill="none" stroke="#fff" stroke-width="1.1"/><path d="M9 17H17M13 13V17" stroke="#fff" stroke-width="1.3"/><path d="M3 6V16" stroke="#fff" stroke-width="1.1"/></svg>
<div class="t" style="left:1483px;top:1023px;font-size:15px;font-weight:bold;color:#f0f020">0</div>
<div class="t" style="left:1512px;top:1023px;font-size:15.5px;color:#fff">ENG</div>
<div class="t" style="left:1562px;top:1023px;font-size:15.5px;color:#fff">16:36</div>
<svg style="left:1625px;top:1019px" width="24" height="22"><path d="M1 1H22V17H12.5L11 19.5L9.5 17H1Z" fill="none" stroke="#fff" stroke-width="1.3"/></svg>
</body></html>
